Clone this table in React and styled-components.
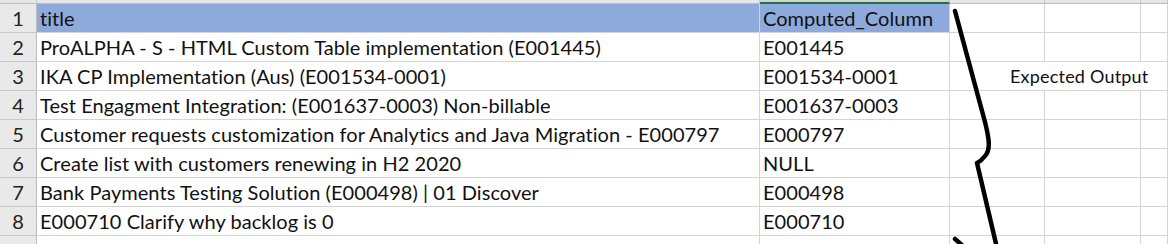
import { Fragment } from "react";
import styled, { createGlobalStyle } from "styled-components";

const GlobalStyle = createGlobalStyle`
  body {
    margin: 0;
    background: #ffffff;
    font-family: Lato, "Open Sans", sans-serif;
  }
`;

const rows = [
  { title: "title", computed: "Computed_Column", header: true },
  { title: "ProALPHA - S - HTML Custom Table implementation (E001445)", computed: "E001445" },
  { title: "IKA CP Implementation (Aus) (E001534-0001)", computed: "E001534-0001", note: "Expected Output" },
  { title: "Test Engagment Integration: (E001637-0003) Non-billable", computed: "E001637-0003" },
  { title: "Customer requests customization for Analytics and Java Migration - E000797", computed: "E000797" },
  { title: "Create list with customers renewing in H2 2020", computed: "NULL" },
  { title: "Bank Payments Testing Solution (E000498) | 01 Discover", computed: "E000498" },
  { title: "E000710 Clarify why backlog is 0", computed: "E000710" },
  { title: "", computed: "", hidden: true },
];

const columns = "37px 723px 190px 95px 96px 1fr";

const Sheet = styled.div`
  position: relative;
  width: 1168px;
  height: 244px;
  overflow: hidden;
  background: #ffffff;
`;

const ColHeaderStrip = styled.div`
  display: grid;
  grid-template-columns: ${columns};
  height: 4px;
`;

const ColHead = styled.div`
  box-sizing: border-box;
  height: 4px;
  background: ${(p) => (p.$selected ? "#d2d2d2" : "#e6e6e6")};
  border-right: 1px solid #c6c6c6;
  border-bottom: ${(p) => (p.$selected ? "2px solid #217346" : "1px solid #bdbdbd")};
`;

const Grid = styled.div`
  display: grid;
  grid-template-columns: ${columns};
  grid-auto-rows: 29px;
`;

const RowNum = styled.div`
  box-sizing: border-box;
  background: #e9e9e9;
  border-right: 1px solid #bdbdbd;
  border-bottom: 1px solid #c8c8c8;
  display: flex;
  align-items: center;
  justify-content: center;
  font-size: 20px;
  color: #222222;
`;

const Cell = styled.div`
  box-sizing: border-box;
  border-right: 1px solid #d4d4d4;
  border-bottom: 1px solid #d4d4d4;
  background: ${(p) => (p.$header ? "#8ea9db" : "#ffffff")};
  display: flex;
  align-items: center;
  padding-left: 3px;
  font-size: 20px;
  letter-spacing: 0.05px;
  color: #111111;
  white-space: nowrap;
  overflow: visible;
`;

const NoteCell = styled(Cell)`
  grid-column: span 3;
  font-size: 18px;
  letter-spacing: 0.2px;
  padding-left: 60px;
`;

const Brace = styled.svg`
  position: absolute;
  left: 0;
  top: 0;
  pointer-events: none;
`;

const App = () => {
  return (
    <Sheet>
      <GlobalStyle />
      <ColHeaderStrip>
        <ColHead />
        <ColHead />
        <ColHead $selected />
        <ColHead />
        <ColHead />
        <ColHead />
      </ColHeaderStrip>
      <Grid>
        {rows.map((row, index) => (
          <Fragment key={index}>
            <RowNum>{row.hidden ? "" : index + 1}</RowNum>
            <Cell $header={row.header}>{row.title}</Cell>
            <Cell $header={row.header}>{row.computed}</Cell>
            {row.note ? (
              <NoteCell>{row.note}</NoteCell>
            ) : (
              <>
                <Cell />
                <Cell />
                <Cell />
              </>
            )}
          </Fragment>
        ))}
      </Grid>
      <Brace width="1168" height="244" viewBox="0 0 1168 244">
        <path
          d="M955 11 L985 122 C989 138 991 150 985 156 C982 160 979 162 977 163 L997 248"
          fill="none"
          stroke="#000"
          strokeWidth="4.5"
          strokeLinecap="round"
          strokeLinejoin="round"
        />
        <path d="M955 239 L963 246" fill="none" stroke="#000" strokeWidth="4.5" strokeLinecap="round" />
      </Brace>
    </Sheet>
  );
};

export default App;
